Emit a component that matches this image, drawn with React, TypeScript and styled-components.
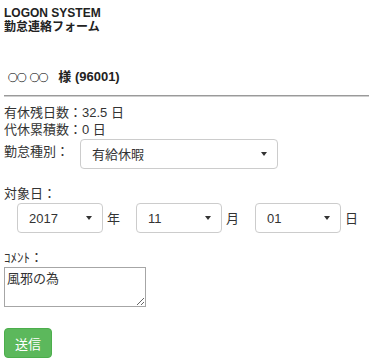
import { FC } from "react";
import styled, { createGlobalStyle } from "styled-components";

const GlobalStyle = createGlobalStyle`
  html, body {
    margin: 0;
    padding: 0;
    background: #fff;
  }
  body {
    font-family: "Liberation Sans", Arial, "Noto Sans CJK JP", sans-serif;
    font-size: 13px;
    line-height: 17px;
    color: #333;
  }
`;

const Page = styled.div`
  padding: 6px 0 0 4px;
`;

const Header = styled.div`
  font-size: 12px;
  line-height: 14px;
  font-weight: bold;
  color: #222;
`;

const UserName = styled.div`
  margin-top: 34px;
  padding-left: 4px;
  font-weight: bold;
  color: #222;
`;

const Circles = styled.span<{ $gap?: number }>`
  font-weight: normal;
  font-family: "Noto Sans CJK JP", sans-serif;
  font-size: 9.5px;
  letter-spacing: -0.5px;
  margin-right: ${(p) => p.$gap ?? 0}px;
  -webkit-text-stroke: 0.25px #222;
`;

const Rule = styled.hr`
  margin: 9px 0 0;
  height: 0;
  border: 0;
  border-top: 1px solid #9a9a9a;
  border-bottom: 1px solid #cfcfcf;
`;

const Info = styled.div`
  margin-top: 7px;
`;

const KindRow = styled.div`
  display: flex;
  align-items: flex-start;
  margin-top: 1px;
`;

const KindLabel = styled.div`
  width: 76px;
  margin-top: 4px;
`;

const SelectWrap = styled.div<{ $width: number }>`
  position: relative;
  width: ${(p) => p.$width}px;
  height: 30px;
  flex: none;

  &::after {
    content: "";
    position: absolute;
    right: 11px;
    top: 13px;
    border-left: 3.5px solid transparent;
    border-right: 3.5px solid transparent;
    border-top: 4px solid #333;
    pointer-events: none;
  }
`;

const Select = styled.select`
  appearance: none;
  -webkit-appearance: none;
  box-sizing: border-box;
  width: 100%;
  height: 30px;
  padding: 0 20px 0 11px;
  border: 1px solid #ccc;
  border-radius: 4px;
  background: #fff;
  font-family: inherit;
  font-size: 13px;
  color: #333;
  outline: none;
`;

const FieldLabel = styled.div`
  margin-top: 16px;
`;

const DateRow = styled.div`
  display: flex;
  align-items: center;
  margin: 1px 0 0 13px;
`;

const Unit = styled.span<{ $last?: boolean }>`
  margin: 0 ${(p) => (p.$last ? 0 : 16)}px 0 4px;
`;

const Comment = styled.textarea`
  display: block;
  box-sizing: border-box;
  width: 142px;
  height: 40px;
  margin-top: 1px;
  padding: 2px 2px;
  border: 1px solid #a6a6a6;
  font-family: inherit;
  font-size: 13px;
  line-height: 17px;
  color: #333;
  resize: both;
  outline: none;
`;

const SubmitButton = styled.button`
  display: block;
  box-sizing: border-box;
  width: 48px;
  height: 30px;
  margin-top: 21px;
  padding: 0 10px;
  border: 1px solid #4cae4c;
  border-radius: 4px;
  background: #5cb85c;
  color: #fff;
  font-family: inherit;
  font-size: 13px;
  cursor: pointer;
`;

const App: FC = () => {
  return (
    <>
      <GlobalStyle />
      <Page>
        <Header>
          LOGON SYSTEM
          <br />
          勤怠連絡フォーム
        </Header>
        <UserName>
          <Circles>○○</Circles> <Circles $gap={7}>○○</Circles> 様 (96001)
        </UserName>
        <Rule />
        <Info>
          <div>有休残日数：32.5 日</div>
          <div>代休累積数：0 日</div>
        </Info>
        <KindRow>
          <KindLabel>勤怠種別：</KindLabel>
          <SelectWrap $width={198}>
            <Select defaultValue="有給休暇">
              <option>有給休暇</option>
              <option>代休</option>
              <option>欠勤</option>
            </Select>
          </SelectWrap>
        </KindRow>
        <FieldLabel>対象日：</FieldLabel>
        <DateRow>
          <SelectWrap $width={86}>
            <Select defaultValue="2017">
              <option>2017</option>
              <option>2018</option>
            </Select>
          </SelectWrap>
          <Unit>年</Unit>
          <SelectWrap $width={86}>
            <Select defaultValue="11">
              <option>10</option>
              <option>11</option>
              <option>12</option>
            </Select>
          </SelectWrap>
          <Unit>月</Unit>
          <SelectWrap $width={86}>
            <Select defaultValue="01">
              <option>01</option>
              <option>02</option>
            </Select>
          </SelectWrap>
          <Unit $last>日</Unit>
        </DateRow>
        <FieldLabel>ｺﾒﾝﾄ：</FieldLabel>
        <Comment defaultValue="風邪の為" />
        <SubmitButton type="button">送信</SubmitButton>
      </Page>
    </>
  );
};

export default App;
